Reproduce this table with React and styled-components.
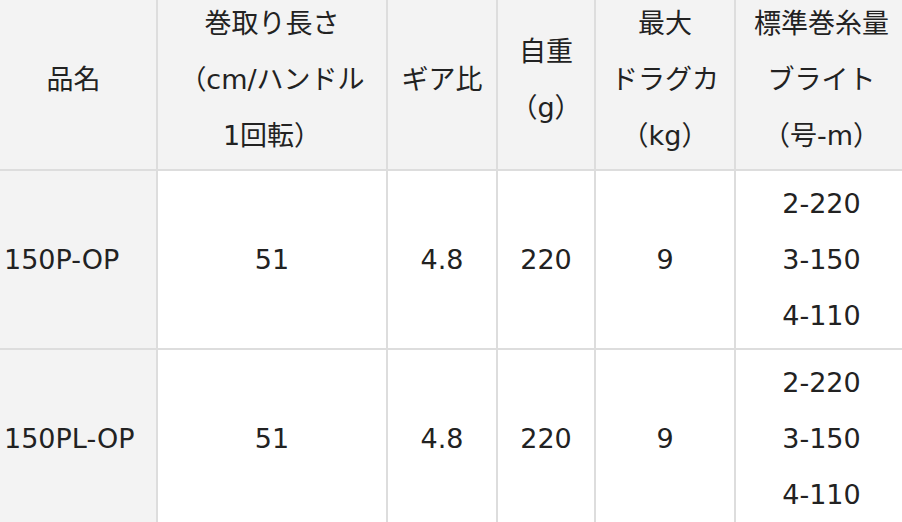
import React from "react";
import styled, { createGlobalStyle } from "styled-components";

const Global = createGlobalStyle`
  html, body { margin: 0; padding: 0; background: #ffffff; overflow: hidden; }
  body {
    font-family: "DejaVu Sans", "Noto Sans CJK JP", sans-serif;
    color: #222222;
  }
`;

const Table = styled.table`
  border-collapse: separate;
  border-spacing: 2px;
  background: #dddddd;
  table-layout: fixed;
  width: 920px;
  margin: -12px 0 0 -11px;
  font-size: 27px;
  line-height: 56px;
`;

const HeadCell = styled.th`
  background: #f3f3f3;
  font-weight: 400;
  text-align: center;
  vertical-align: middle;
  padding: 0;
  height: 179px;
  white-space: nowrap;
`;

const NameCell = styled.th`
  background: #f3f3f3;
  font-weight: 400;
  text-align: left;
  vertical-align: middle;
  padding: 0 0 0 13px;
  height: 177px;
  white-space: nowrap;
`;

const Cell = styled.td`
  background: #ffffff;
  text-align: center;
  vertical-align: middle;
  padding: 0;
  height: 177px;
  white-space: nowrap;
`;

const cols = [165, 228, 108, 96, 138, 171];

const headers = [
  ["品名"],
  ["巻取り長さ", "（cm/ハンドル", "1回転）"],
  ["ギア比"],
  ["自重", "（g）"],
  ["最大", "ドラグカ", "（kg）"],
  ["標準巻糸量", "ブライト", "（号-m）"],
];

const rows = [
  { name: "150P-OP", values: ["51", "4.8", "220", "9"], line: ["2-220", "3-150", "4-110"] },
  { name: "150PL-OP", values: ["51", "4.8", "220", "9"], line: ["2-220", "3-150", "4-110"] },
];

const Lines = ({ items }) =>
  items.map((t, i) => (
    <React.Fragment key={i}>
      {i > 0 && <br />}
      {t}
    </React.Fragment>
  ));

export default function App() {
  return (
    <>
      <Global />
      <Table>
        <colgroup>
          {cols.map((w, i) => (
            <col key={i} style={{ width: w }} />
          ))}
        </colgroup>
        <thead>
          <tr>
            {headers.map((h, i) => (
              <HeadCell key={i}>
                <Lines items={h} />
              </HeadCell>
            ))}
          </tr>
        </thead>
        <tbody>
          {rows.map((r) => (
            <tr key={r.name}>
              <NameCell scope="row">{r.name}</NameCell>
              {r.values.map((v, i) => (
                <Cell key={i}>{v}</Cell>
              ))}
              <Cell>
                <Lines items={r.line} />
              </Cell>
            </tr>
          ))}
        </tbody>
      </Table>
    </>
  );
}
